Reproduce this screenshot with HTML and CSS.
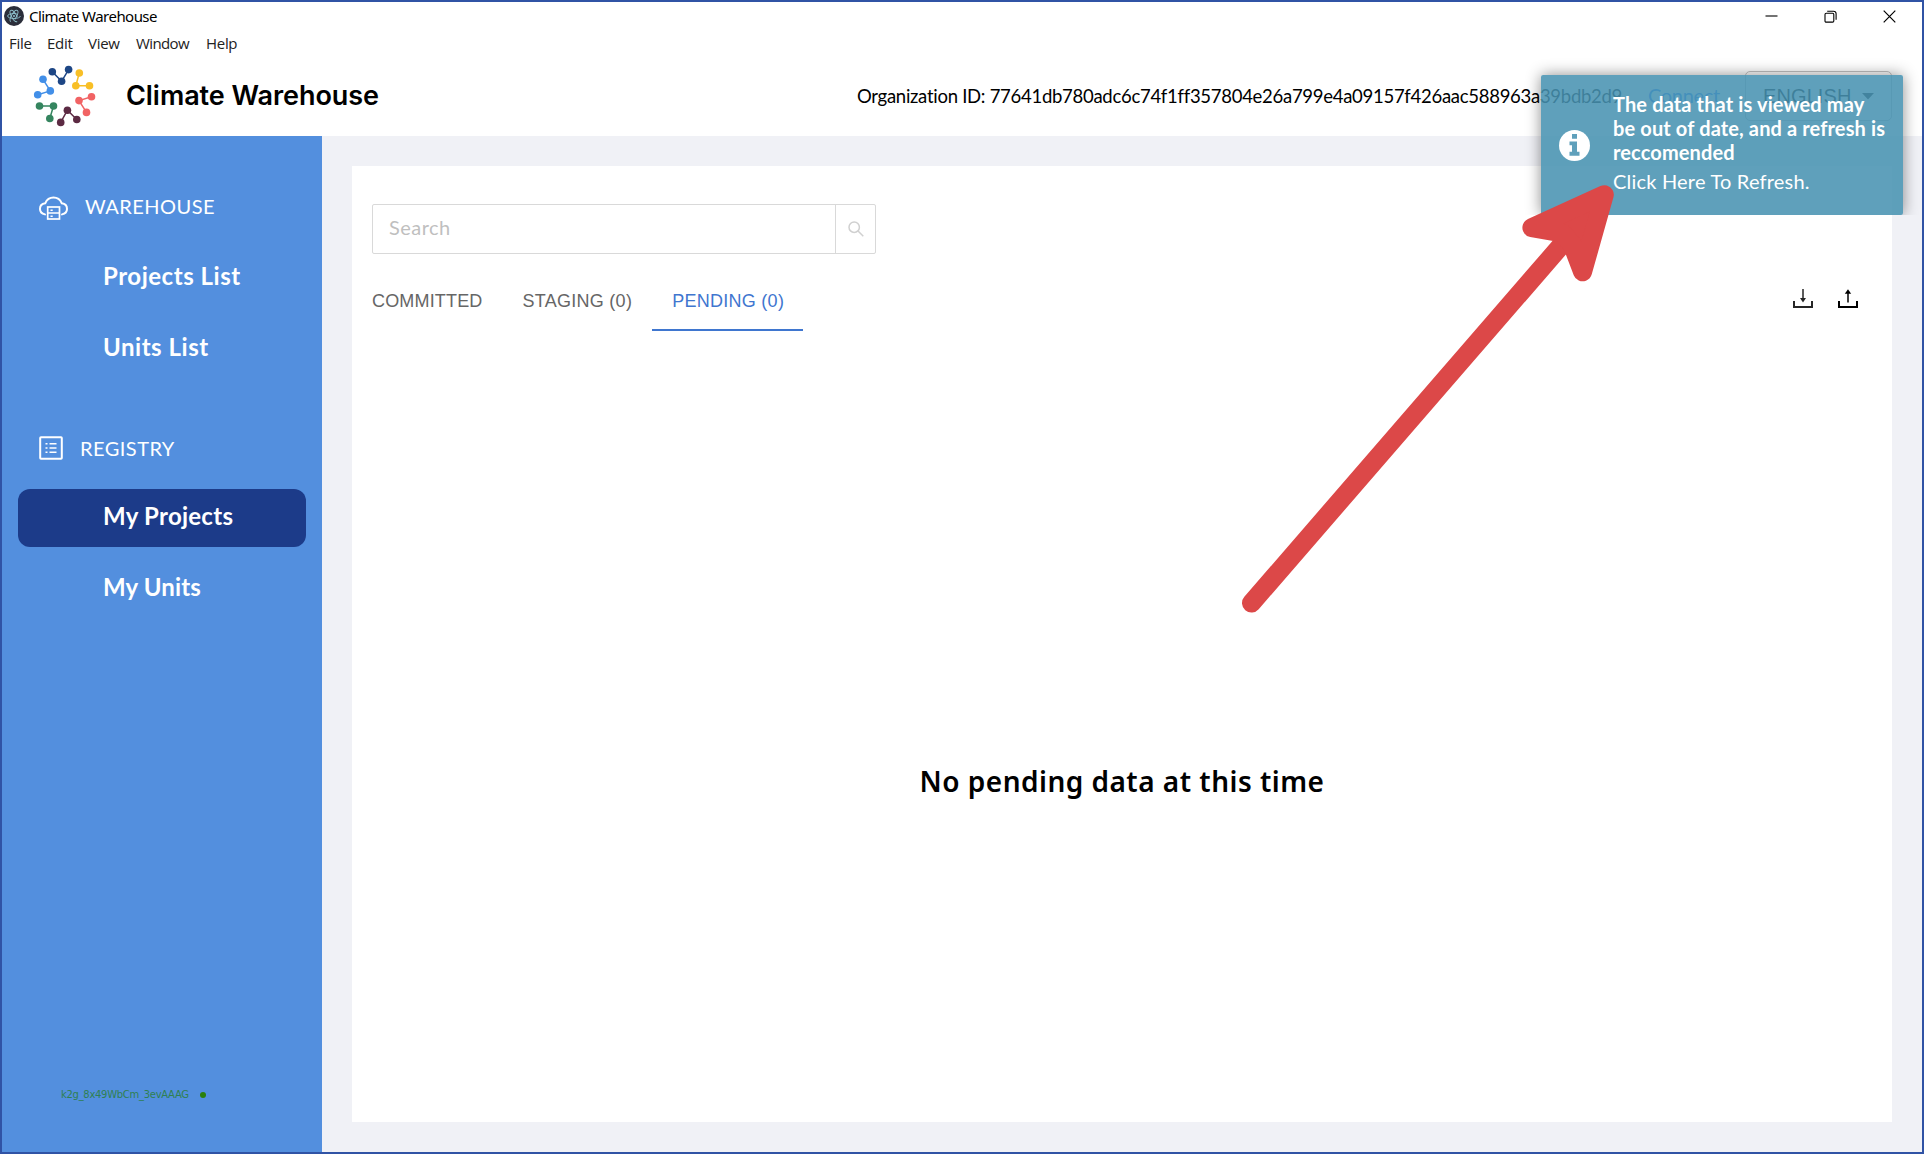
FILE: index.html
```html
<!DOCTYPE html>
<html lang="en">
<head>
<meta charset="utf-8">
<title>Climate Warehouse</title>
<link rel="stylesheet" href="styles.css">
</head>
<body>
<div class="window">
  <div class="titlebar">
    <svg class="app-icon" width="20" height="20" viewBox="0 0 20 20">
      <circle cx="10" cy="10" r="10" fill="#2b2e3a"/>
      <g fill="none" stroke="#8fc3cd" stroke-width=".9">
        <ellipse cx="10" cy="10" rx="6.4" ry="2.5" stroke-dasharray="24 5"/>
        <ellipse cx="10" cy="10" rx="6.4" ry="2.5" transform="rotate(60 10 10)" stroke-dasharray="24 5"/>
        <ellipse cx="10" cy="10" rx="6.4" ry="2.5" transform="rotate(120 10 10)" stroke-dasharray="24 5"/>
      </g>
      <circle cx="10" cy="10" r="1" fill="#8fc3cd"/>
    </svg>
    <span class="app-name">Climate Warehouse</span>
    <div class="controls">
      <svg width="13" height="13" viewBox="0 0 13 13"><path d="M.5 6h12" stroke="#000" stroke-width="1.1"/></svg>
      <svg width="13" height="13" viewBox="0 0 13 13" fill="none" stroke="#000" stroke-width="1.1"><rect x="1" y="3.3" width="8.8" height="8.8" rx="1.2"/><path d="M3.2 1.2h6.3a2.6 2.6 0 0 1 2.6 2.6v6"/></svg>
      <svg width="13" height="13" viewBox="0 0 13 13"><path d="M.7.7l11.6 11.6M12.3.7.7 12.3" stroke="#000" stroke-width="1.2"/></svg>
    </div>
  </div>
  <div class="menubar">
    <span class="m-file">File</span><span class="m-edit">Edit</span><span class="m-view">View</span><span class="m-window">Window</span><span class="m-help">Help</span>
  </div>
  <header class="header">
    <svg class="logo" width="64" height="64" viewBox="32 64 64 64">
      <g fill="none" stroke-width="1.5">
        <path stroke="#1d4685" d="M52.3 71.7l9.3 9.6 7-11.7"/>
        <path stroke="#f8bf26" d="M79.3 73l-3.5 12.7h13.7"/>
        <path stroke="#f16364" d="M91.5 96.8L79 100.6l7.5 11.8"/>
        <path stroke="#5c2a43" d="M60.7 122.4l6.7-12.2 9.4 9.3"/>
        <path stroke="#35855f" d="M39.5 106h14l-3.7 12.5"/>
        <path stroke="#428fe8" d="M43 79.3l7.3 11.6-12.6 3.8"/>
      </g>
      <g fill="#1d4685"><circle cx="52.3" cy="71.7" r="3.8"/><circle cx="61.6" cy="81.3" r="3.8"/><circle cx="68.6" cy="69.6" r="3.8"/></g>
      <g fill="#f8bf26"><circle cx="79.3" cy="73" r="3.8"/><circle cx="75.8" cy="85.7" r="3.8"/><circle cx="89.5" cy="85.7" r="3.8"/></g>
      <g fill="#f16364"><circle cx="91.5" cy="96.8" r="3.8"/><circle cx="79" cy="100.6" r="3.8"/><circle cx="86.5" cy="112.4" r="3.8"/></g>
      <g fill="#5c2a43"><circle cx="60.7" cy="122.4" r="3.8"/><circle cx="67.4" cy="110.2" r="3.8"/><circle cx="76.8" cy="119.5" r="3.8"/></g>
      <g fill="#35855f"><circle cx="39.5" cy="106" r="3.8"/><circle cx="53.5" cy="106" r="3.8"/><circle cx="49.8" cy="118.5" r="3.8"/></g>
      <g fill="#428fe8"><circle cx="43" cy="79.3" r="3.8"/><circle cx="50.3" cy="90.9" r="3.8"/><circle cx="37.7" cy="94.7" r="3.8"/></g>
    </svg>
    <h1 class="brand">Climate Warehouse</h1>
    <div class="account">
      <span class="org">Organization ID: 77641db780adc6c74f1ff357804e26a799e4a09157f426aac588963a39bdb2d9</span>
      <span class="connect">Connect</span>
      <div class="language"><span>ENGLISH</span><svg width="12" height="7" viewBox="0 0 12 7"><path d="M0 0h12L6 6.5z" fill="#222"/></svg></div>
    </div>
  </header>
  <div class="body">
    <nav class="sidebar">
      <div class="section">
        <svg width="29" height="25" viewBox="0 0 29 25" fill="none" stroke="#fff">
          <path stroke-width="2" stroke-linecap="round" d="M6 18.4C2.800 17.600 1 15.700 1 12.900C1 9.900 3 7.800 6.200 7.300C7.800 3.700 10.600 1.600 14.500 1.600S21.200 3.700 22.800 7.300C26 7.800 28 9.900 28 12.900C28 15.700 26.200 17.600 23 18.400"/>
          <rect x="8.700" y="11" width="11.800" height="12" stroke-width="1.700"/><path stroke-width="1.500" d="M8.700 17h11.800M11.500 14.200h2.200M11.500 20.200h2.200"/>
        </svg>
        <span>WAREHOUSE</span>
      </div>
      <a class="item">Projects List</a>
      <a class="item">Units List</a>
      <div class="section registry">
        <svg width="24" height="24" viewBox="0 0 24 24" fill="none" stroke="#fff">
          <rect x="1.200" y="1.200" width="21.600" height="21.600" rx=".8" stroke-width="2"/><path stroke-width="1.600" d="M6.500 7.700h2M10.500 7.700h7M6.500 12h2M10.500 12h7M6.500 16.300h2M10.500 16.300h7"/>
        </svg>
        <span>REGISTRY</span>
      </div>
      <a class="item active">My Projects</a>
      <a class="item last">My Units</a>
      <div class="socket"><span>k2g_8x49WbCm_3evAAAG</span><i class="dot"></i></div>
    </nav>
    <main class="main">
      <div class="panel">
        <div class="search">
          <div class="search-field">Search</div>
          <div class="search-button"><svg width="16" height="16" viewBox="0 0 16 16" fill="none" stroke="#d0d0d0" stroke-width="1.500"><circle cx="6.200" cy="6.200" r="5.200"/><path d="M10 10l5.300 5.300"/></svg></div>
        </div>
        <div class="toolbar">
          <div class="tabs">
            <span class="tab committed">COMMITTED</span><span class="tab">STAGING (0)</span><span class="tab selected">PENDING (0)</span>
          </div>
          <div class="transfer">
            <svg width="20" height="20" viewBox="0 0 20 20" fill="none" stroke="#262626" stroke-width="2"><path d="M1 12v6h18v-6"/><path stroke-width="1.500" d="M10 0v11"/><path d="M7 9h6l-3 4.500z" fill="#262626" stroke="none"/></svg>
            <svg width="20" height="20" viewBox="0 0 20 20" fill="none" stroke="#000" stroke-width="2"><path d="M1 12v6h18v-6"/><path stroke-width="1.500" d="M10 3v10.500"/><path d="M6.800 4.800h6.400L10 .300z" fill="#000" stroke="none"/></svg>
          </div>
        </div>
        <div class="empty">No pending data at this time</div>
      </div>
    </main>
  </div>
  <div class="toast">
    <svg width="31" height="31" viewBox="0 0 31 31"><circle cx="15.500" cy="15.500" r="15.500" fill="#fff"/><path fill="#5fa0bb" d="M13 4h5v4.800h-5zM10.500 11.500H18v10.300h2.500v4h-10v-4H13v-6.500h-2.500z"/></svg>
    <div class="toast-text">
      <div class="toast-title">The data that is viewed may<br>be out of date, and a refresh is<br>reccomended</div>
      <div class="toast-link">Click Here To Refresh.</div>
    </div>
  </div>
  <svg class="arrow" width="385" height="440" viewBox="1235 180 385 440" stroke="#dc4848" stroke-width="19" stroke-linecap="round" stroke-linejoin="round" fill="#dc4848">
    <path d="M1251.500 603L1562 244.500"/>
    <path d="M1604.300 194.700L1531.900 227.600 1562 233 1572 244 1582.600 271.800z"/>
  </svg>
</div>
</body>
</html>
```
FILE: styles.css
```css
* { box-sizing: border-box; }
body {
  margin: 0;
  font-family: "Lato", sans-serif;
  color: #000;
}
.window {
  position: relative;
  display: flex;
  flex-direction: column;
  width: 1924px;
  height: 1154px;
  border: 2px solid #3053a5;
  background: #fff;
  overflow: hidden;
}
svg { display: block; flex: none; }
span, a { white-space: nowrap; }

.titlebar {
  display: flex;
  align-items: center;
  height: 28px;
  padding: 0 26px 0 2px;
  font: 15px/28px "Noto Sans", sans-serif;
  letter-spacing: -.54px;
}
.app-name { margin-left: 5px; }
.controls { display: flex; gap: 46px; margin-left: auto; }
.menubar {
  display: flex;
  height: 26px;
  padding-left: 7px;
  font: 15px/26px "Open Sans", sans-serif;
  letter-spacing: -.3px;
  color: #222;
}
.m-file { width: 38px; }
.m-edit { width: 41px; }
.m-view { width: 48px; }
.m-window { width: 70px; letter-spacing: -.6px; }

.header {
  display: flex;
  align-items: center;
  flex: none;
  height: 80px;
  padding: 0 30px 0 30px;
}
.brand {
  margin: 0 0 0 30px;
  font: 600 27px/32px "Inter", sans-serif;
  letter-spacing: -.05px;
}
.account { display: flex; align-items: center; margin-left: auto; }
.org { width: 765px; font-size: 18.500px; letter-spacing: -.28px; line-height: 24px; padding-bottom: 1px; }
.connect { width: 74px; margin-left: 26px; font-size: 20px; letter-spacing: -.32px; line-height: 24px; color: #2f80ff; padding-bottom: 2px; }
.language {
  display: flex;
  align-items: center;
  justify-content: space-between;
  width: 147px;
  height: 50px;
  margin-left: 23px;
  padding: 0 17px;
  border: 1px solid #c4c4c4;
  border-radius: 5px;
  font: 20px/24px "Liberation Sans", sans-serif;
  letter-spacing: .1px;
}

.body { display: flex; flex: 1; min-height: 0; }
.sidebar {
  display: flex;
  flex: none;
  flex-direction: column;
  width: 320px;
  padding: 39px 16px 0;
  background: #538fde;
  color: #fff;
}
.section {
  display: flex;
  align-items: center;
  height: 61px;
  margin-bottom: 14px;
  padding-left: 21px;
  font-size: 20px;
  letter-spacing: .46px;
}
.section svg { margin-top: 6px; }
.section span { margin-left: 17px; }
.section.registry { margin: 26px 0 11px; height: 60px; }
.registry svg { margin-top: 0; }
.registry span { margin-left: 17px; }
.item {
  height: 58px;
  margin-bottom: 13px;
  padding-left: 85px;
  border-radius: 12px;
  font-size: 24px;
  font-weight: 700;
  line-height: 52px;
  letter-spacing: .53px;
}
.item.active { background: #1c3b89; letter-spacing: .26px; line-height: 54px; }
.item.last { letter-spacing: .15px; line-height: 54px; }
.socket {
  display: flex;
  align-items: center;
  gap: 11px;
  margin: auto 0 49px 43px;
  font: 10px/16px "DejaVu Sans", sans-serif;
  letter-spacing: -.29px;
  color: #2f8052;
}
.dot { width: 6px; height: 6px; border-radius: 50%; background: #2b800b; }

.main { flex: 1; padding: 30px; background: #f0f1f6; }
.panel {
  display: flex;
  flex-direction: column;
  width: 1540px;
  height: 956px;
  padding: 38px 20px 0;
  background: #fff;
}
.search {
  display: flex;
  width: 504px;
  height: 50px;
  border: 1px solid #d9d9d9;
  border-radius: 2px;
}
.search-field {
  flex: 1;
  padding-left: 16px;
  font-size: 20px;
  line-height: 45px;
  letter-spacing: .46px;
  color: #bfbfbf;
}
.search-button {
  display: flex;
  align-items: center;
  justify-content: center;
  width: 40px;
  border-left: 1px solid #d9d9d9;
}
.toolbar { display: flex; justify-content: space-between; height: 77px; }
.tabs { display: flex; align-items: flex-end; }
.tab {
  height: 61px;
  padding: 0 20px;
  border-bottom: 2px solid transparent;
  font: 18px/63px "Liberation Sans", sans-serif;
  letter-spacing: .27px;
  color: #666;
}
.tab.committed { padding-left: 0; letter-spacing: .17px; }
.tab.selected { padding-right: 19px; border-color: #3f76cf; color: #3f76cf; }
.transfer { display: flex; gap: 25px; padding: 35px 14px 0 0; }
.empty {
  padding-top: 430px;
  text-align: center;
  font: 600 28px/40px "Noto Sans", sans-serif;
  letter-spacing: .48px;
}

.toast {
  position: absolute;
  left: 1539px;
  top: 73px;
  display: flex;
  align-items: center;
  gap: 23px;
  width: 362px;
  height: 140px;
  padding-left: 18px;
  border-radius: 2px;
  background: rgba(71, 146, 177, .87);
  box-shadow: 0 0 15px rgba(0, 0, 0, .45);
  clip-path: inset(-20px -20px 0 -20px);
  color: #fff;
}
.toast-text { padding-bottom: 5px; }
.toast-title { font-size: 20px; font-weight: 700; line-height: 24px; letter-spacing: .13px; white-space: nowrap; }
.toast-link { margin-top: 5px; font-size: 20px; line-height: 24px; letter-spacing: .2px; }
.arrow { position: absolute; left: 1233px; top: 178px; }
```
